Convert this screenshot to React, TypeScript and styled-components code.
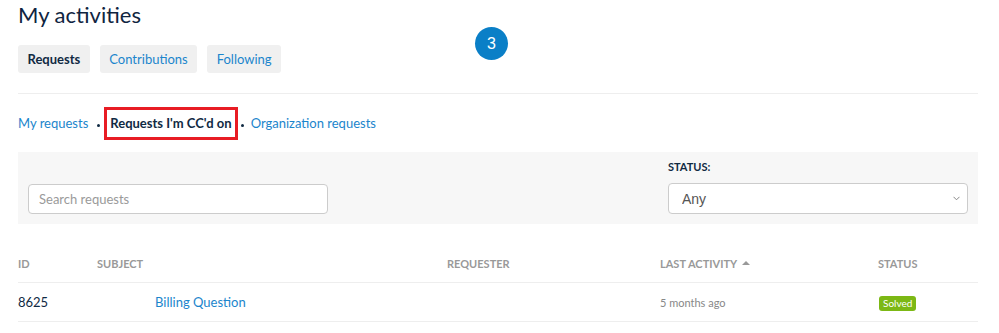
import React from 'react';
import styled, { createGlobalStyle } from 'styled-components';

const GlobalStyle = createGlobalStyle`
  body {
    margin: 0;
    background: #fff;
    font-family: Lato, "Noto Sans", sans-serif;
    color: #102a43;
  }
`;

const LINK = '#1b85cc';

const Page = styled.div`
  position: relative;
  width: 960px;
  padding: 0 0 0 18px;
`;

const Title = styled.h1`
  margin: 0;
  padding-top: 1px;
  font-size: 22px;
  font-weight: 400;
  line-height: 28px;
  color: #0f2440;
`;

const Tabs = styled.nav`
  display: flex;
  gap: 10px;
  margin-top: 16px;
`;

const Tab = styled.a<{ $active?: boolean }>`
  display: flex;
  align-items: center;
  height: 28px;
  padding: 0 9.5px;
  border-radius: 3px;
  background: #f0f0f0;
  font-size: 13px;
  font-weight: ${(p) => (p.$active ? 700 : 400)};
  color: ${(p) => (p.$active ? '#102a43' : LINK)};
  text-decoration: none;
`;

const Divider = styled.hr`
  margin: 20px 0 0;
  border: 0;
  border-top: 1px solid #eee;
`;

const SubNav = styled.nav`
  display: flex;
  align-items: center;
  margin-top: 12px;
  height: 34px;
  font-size: 13px;
`;

const SubLink = styled.a<{ $current?: boolean }>`
  display: flex;
  align-items: center;
  height: 33px;
  box-sizing: border-box;
  color: ${(p) => (p.$current ? '#102a43' : LINK)};
  font-weight: ${(p) => (p.$current ? 700 : 400)};
  text-decoration: none;
  ${(p) =>
    p.$current &&
    `
    border: 3px solid #e81c24;
    padding: 0 3px 0 3px;
  `}
`;

const Dot = styled.span`
  width: 3px;
  height: 3px;
  border-radius: 50%;
  background: #102a43;
  margin: 4px 4px 0 9px;
`;

const DotAfter = styled(Dot)`
  margin: 4px 7px 0 3px;
`;

const Filters = styled.div`
  display: flex;
  justify-content: space-between;
  align-items: flex-end;
  margin-top: 12px;
  height: 72px;
  box-sizing: border-box;
  padding: 0 10px 10px 10px;
  background: #f7f7f7;
`;

const Field = styled.div`
  display: flex;
  flex-direction: column;
`;

const Label = styled.label`
  font-size: 11px;
  font-weight: 700;
  color: #102a43;
  margin-bottom: 10px;
`;

const SearchInput = styled.input`
  width: 300px;
  height: 30px;
  box-sizing: border-box;
  border: 1px solid #ccc;
  border-radius: 4px;
  padding: 0 10px;
  font-family: Lato, sans-serif;
  font-size: 13px;
  color: #333;
  &::placeholder {
    color: #9a9a9a;
  }
`;

const SelectWrap = styled.div`
  position: relative;
`;

const Select = styled.select`
  display: block;
  width: 300px;
  height: 31px;
  box-sizing: border-box;
  border: 1px solid #ccc;
  border-radius: 4px;
  padding: 0 13px;
  font-family: "Liberation Sans", Arial, sans-serif;
  font-size: 14px;
  color: #555;
  background: #fff;
  appearance: none;
`;

const Chevron = styled.svg`
  position: absolute;
  right: 8px;
  top: 13px;
  pointer-events: none;
`;

const COLS = '79px 350px 213px 218px 1fr';

const HeadRow = styled.div`
  display: grid;
  grid-template-columns: ${COLS};
  align-items: center;
  margin-top: 20px;
  height: 38px;
  border-bottom: 1px solid #eee;
`;

const Th = styled.div`
  display: flex;
  align-items: center;
  gap: 5px;
  font-size: 11px;
  font-weight: 700;
  text-transform: uppercase;
  color: #999;
`;

const Caret = styled.span`
  width: 0;
  height: 0;
  border-left: 4px solid transparent;
  border-right: 4px solid transparent;
  border-bottom: 4px solid #999;
`;

const Row = styled.div`
  display: grid;
  grid-template-columns: ${COLS};
  align-items: center;
  height: 38px;
  border-bottom: 1px solid #eee;
`;

const Td = styled.div<{ $muted?: boolean; $indent?: number }>`
  font-size: ${(p) => (p.$muted ? '11px' : '13px')};
  color: ${(p) => (p.$muted ? '#888' : '#102a43')};
  padding-left: ${(p) => p.$indent || 0}px;
`;

const RowLink = styled.a`
  color: ${LINK};
  text-decoration: none;
`;

const StatusBadge = styled.span`
  display: inline-block;
  background: #7cb815;
  color: #fff;
  font-size: 10px;
  line-height: 15px;
  padding: 0 4px;
  border-radius: 3px;
  margin-left: 1px;
`;

const CountBubble = styled.div`
  position: absolute;
  left: 475px;
  top: 27px;
  width: 33px;
  height: 33px;
  border-radius: 50%;
  background: #0a7fc7;
  color: #fff;
  display: flex;
  align-items: center;
  justify-content: center;
  font-family: "Liberation Sans", Arial, sans-serif;
  font-size: 16px;
`;

export default function App() {
  return (
    <Page>
      <GlobalStyle />
      <Title>My activities</Title>
      <Tabs>
        <Tab $active>Requests</Tab>
        <Tab>Contributions</Tab>
        <Tab>Following</Tab>
      </Tabs>
      <CountBubble>3</CountBubble>
      <Divider />
      <SubNav>
        <SubLink>My requests</SubLink>
        <Dot />
        <SubLink $current>Requests I'm CC'd on</SubLink>
        <DotAfter />
        <SubLink>Organization requests</SubLink>
      </SubNav>
      <Filters>
        <Field>
          <SearchInput placeholder="Search requests" />
        </Field>
        <Field>
          <Label>STATUS:</Label>
          <SelectWrap>
            <Select defaultValue="any">
              <option value="any">Any</option>
              <option value="open">Open</option>
              <option value="solved">Solved</option>
            </Select>
            <Chevron width="7" height="5" viewBox="0 0 7 5">
              <path d="M0.5 0.8 L3.5 3.8 L6.5 0.8" fill="none" stroke="#888" strokeWidth="1" />
            </Chevron>
          </SelectWrap>
        </Field>
      </Filters>
      <HeadRow>
        <Th>ID</Th>
        <Th>Subject</Th>
        <Th>Requester</Th>
        <Th>
          Last activity <Caret />
        </Th>
        <Th>Status</Th>
      </HeadRow>
      <Row>
        <Td>8625</Td>
        <Td $indent={58}>
          <RowLink>Billing Question</RowLink>
        </Td>
        <Td />
        <Td $muted>5 months ago</Td>
        <Td>
          <StatusBadge>Solved</StatusBadge>
        </Td>
      </Row>
    </Page>
  );
}
